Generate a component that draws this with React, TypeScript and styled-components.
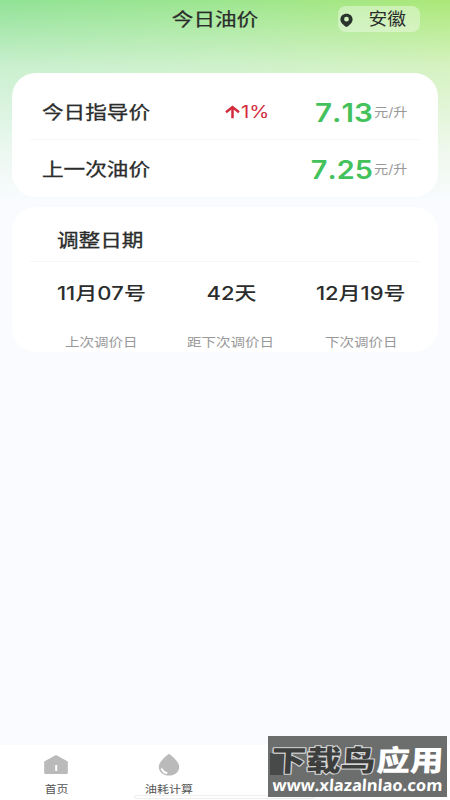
import React from "react";
import styled, { createGlobalStyle } from "styled-components";

const GlobalStyle = createGlobalStyle`
  * { box-sizing: border-box; }
  body { margin: 0; font-family: Inter, "Noto Sans CJK SC", sans-serif; color: #2b2d2c; font-kerning: none; font-feature-settings: "calt" 0; }
`;

const Page = styled.main`
  width: 450px;
  height: 800px;
  display: flex;
  flex-direction: column;
  overflow: hidden;
  background:
    linear-gradient(180deg, rgba(249,251,254,0) 0, rgba(249,251,254,.54) 66px, rgba(249,251,254,.85) 145px, #f9fbfe 200px),
    linear-gradient(90deg, #91e296 0, #9de68f 50%, #abe878 100%);
`;

/* Wide-set type: glyphs are drawn horizontally extended. */
const Wide = styled.span<{ $size: number; $x?: number; $weight?: number; $color?: string; $origin?: string; $stroke?: number }>`
  display: inline-block;
  white-space: nowrap;
  font-size: ${(p) => p.$size}px;
  line-height: 1.2;
  font-weight: ${(p) => p.$weight ?? 400};
  color: ${(p) => p.$color ?? "inherit"};
  -webkit-text-stroke: ${(p) => p.$stroke ?? 0}px currentColor;
  transform: scaleX(${(p) => p.$x ?? 1.16});
  transform-origin: ${(p) => p.$origin ?? "center"};
`;

const Header = styled.header`
  height: 73px;
  flex: none;
  display: grid;
  grid-template-columns: 91px 247px 82px;
  align-items: start;
  padding-top: 6px;
`;

const Title = styled.div`
  grid-column: 2;
  display: flex;
  height: 26px;
  align-items: center;
  justify-content: center;
  padding-top: 1px;
`;

const Location = styled.button`
  display: flex;
  height: 26px;
  border: 0;
  border-radius: 8px;
  padding: 2px 14px 0 2px;
  align-items: center;
  justify-content: space-between;
  background: rgba(255, 255, 255, 0.38);
  font-family: inherit;
  color: inherit;
`;

const Card = styled.section<{ $h: number }>`
  flex: none;
  width: 426px;
  height: ${(p) => p.$h}px;
  margin: 0 12px 10px;
  border-radius: 24px;
  background: #fff;
  padding: 0 18px;
`;

const PriceRow = styled.div`
  height: 57px;
  display: grid;
  grid-template-columns: 168px 100px 1fr;
  align-items: center;
  padding: 2px 12px 0 12px;
  & + & { border-top: 1px solid #f7f7f7; height: 58px; }
  &:first-child { height: 66px; padding-top: 13px; }
`;

const Change = styled.div`
  display: flex;
  align-items: center;
  padding-left: 15px;
  color: #d32c3c;
  gap: 1px;
`;

const Price = styled.div`
  display: flex;
  justify-content: flex-end;
  align-items: center;
`;

const Unit = styled.div`
  width: 35px;
  display: flex;
  padding-left: 1px;
`;

const CardHeading = styled.h2`
  margin: 0;
  height: 55px;
  border-bottom: 1px solid #f7f7f7;
  padding: 13px 0 0 27px;
  display: flex;
  align-items: center;
`;

const Dates = styled.div`
  display: grid;
  grid-template-columns: repeat(3, 130px);
  margin-left: 6px;
`;

const DateCell = styled.div`
  display: flex;
  flex-direction: column;
  align-items: center;
  padding-top: 21px;
  gap: 30px;
`;

const Tabs = styled.nav`
  height: 55px;
  flex: none;
  margin-top: auto;
  display: grid;
  grid-template-columns: repeat(4, 112.5px);
  background: #fff;
  position: relative;
`;

const Tab = styled.div`
  display: flex;
  flex-direction: column;
  align-items: center;
  padding-top: 8px;
  gap: 7px;
`;

const HomeBar = styled.div`
  position: absolute;
  left: 134px;
  bottom: 1px;
  width: 181px;
  height: 4px;
  border: 1px solid #eee;
  border-radius: 2px;
  background: #fff;
`;

const Watermark = styled.div`
  position: absolute;
  right: 3px;
  bottom: 3px;
  width: 179px;
  height: 61px;
  background: #6c6e6d;
  overflow: hidden;
`;

const Mark = styled.svg`
  display: block;
`;

const dates = [
  ["11月07号", "上次调价日"],
  ["42天", "距下次调价日"],
  ["12月19号", "下次调价日"],
];

const PinIcon = () => (
  <svg width="13" height="15" viewBox="0 0 13 15">
    <path fillRule="evenodd" d="M6.500 .8C3 .8.400 3.200.400 6.400c0 3.300 3.500 5.800 6.100 7.700 2.600-1.900 6.100-4.400 6.100-7.700C12.600 3.200 10 .8 6.500 .8Zm0 3a2.400 2.400 0 1 1 0 4.800 2.400 2.400 0 0 1 0-4.800Z" fill="#2b342c" />
  </svg>
);

const ArrowUp = () => (
  <svg width="15" height="14" viewBox="0 0 15 14" fill="none" stroke="currentColor" strokeWidth="2.500">
    <path d="M7.500 13.200V2M1 7.200l6.500-5.200 6.500 5.200" />
  </svg>
);

const HomeIcon = () => (
  <svg width="26" height="24" viewBox="0 0 26 24">
    <path d="M13 2 24 8q.8.500.8 1.300v10.500q0 1.200-1.300 1.200h-21Q1.200 21 1.200 19.800V9.300Q1.200 8.500 2 8Z" fill="#bababa" />
    <path d="M13.200 12v6" stroke="#fff" strokeWidth="2" />
  </svg>
);

const DropIcon = () => (
  <svg width="24" height="24" viewBox="0 0 24 24">
    <path d="M12 .8C16 4 22.200 9 22.200 14c0 5-4.600 8.600-10.200 8.600S1.800 19 1.800 14C1.800 9 8 4 12 .8Z" fill="#bababa" />
    <path d="M4.800 16.200c1 2 2.500 3.300 4.700 3.800" stroke="#fff" strokeWidth="2" strokeLinecap="round" fill="none" />
  </svg>
);

export default function App() {
  return (
    <>
      <GlobalStyle />
      <Page>
        <Header>
          <Title><Wide $size={18} $x={1.200} $stroke={0.25}>今日油价</Wide></Title>
          <Location><PinIcon /><Wide $size={16.500} $x={1.140} $origin="right">安徽</Wide></Location>
        </Header>
        <Card $h={124}>
          <PriceRow>
            <Wide $size={18} $x={1.200} $stroke={0.3} $origin="left">今日指导价</Wide>
            <Change><ArrowUp /><Wide $size={17} $x={1.200} $origin="left">1%</Wide></Change>
            <Price>
              <Wide $size={26} $x={1.140} $weight={600} $color="#43c15b" $origin="right">7.13</Wide>
              <Unit><Wide $size={12.500} $x={1.130} $color="#999" $origin="left">元/升</Wide></Unit>
            </Price>
          </PriceRow>
          <PriceRow>
            <Wide $size={18} $x={1.200} $stroke={0.3} $origin="left">上一次油价</Wide>
            <span />
            <Price>
              <Wide $size={26} $x={1.110} $weight={600} $color="#43c15b" $origin="right">7.25</Wide>
              <Unit><Wide $size={12.500} $x={1.130} $color="#999" $origin="left">元/升</Wide></Unit>
            </Price>
          </PriceRow>
        </Card>
        <Card $h={145}>
          <CardHeading><Wide $size={18} $x={1.200} $stroke={0.3} $origin="left">调整日期</Wide></CardHeading>
          <Dates>
            {dates.map(([value, label]) => (
              <DateCell key={label}>
                <Wide $size={18} $x={1.220} $weight={500}>{value}</Wide>
                <Wide $size={12.500} $x={1.160} $color="#999">{label}</Wide>
              </DateCell>
            ))}
          </Dates>
        </Card>
        <Tabs>
          <Tab><HomeIcon /><Wide $size={10.500} $x={1.130} $color="#555">首页</Wide></Tab>
          <Tab><DropIcon /><Wide $size={10.500} $x={1.140} $color="#555">油耗计算</Wide></Tab>
          <HomeBar />
          <Watermark>
            <Mark width="179" height="61" viewBox="0 0 179 61">
              <rect x="2" y="17" width="21" height="22" fill="#484a49" />
              <g fontFamily="Noto Sans CJK SC" fontWeight="900" fontSize="29" strokeLinejoin="round" paintOrder="stroke">
                <text x="0" y="0" transform="translate(3 35) skewX(-3)" textLength="104" lengthAdjust="spacingAndGlyphs" fill="#3d3f3e" stroke="#d5d5d5" strokeWidth="2.200">下载鸟</text>
                <text x="0" y="0" transform="translate(108 35) skewX(-3)" textLength="67" lengthAdjust="spacingAndGlyphs" fill="#fff">应用</text>
              </g>
              <text x="0" y="0" transform="translate(4 55) skewX(-4)" textLength="170" lengthAdjust="spacingAndGlyphs" fontFamily="Noto Sans" fontSize="16" fontWeight="700" fill="#fff">www.xlazalnlao.com</text>
            </Mark>
          </Watermark>
        </Tabs>
      </Page>
    </>
  );
}
